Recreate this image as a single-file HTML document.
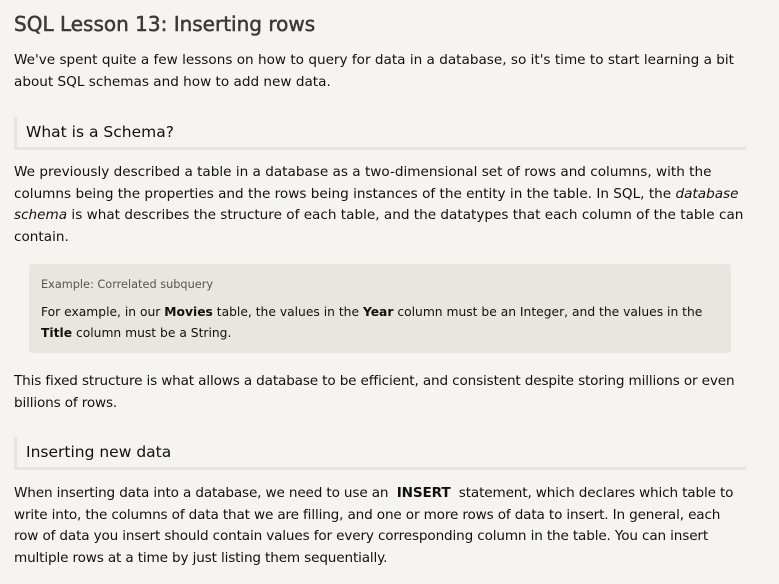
<!DOCTYPE html>
<html><head><style>
html,body{margin:0;background:#f5f4f0;width:779px;height:584px;overflow:hidden}
body{font-family:"DejaVu Sans",sans-serif;color:#111;font-size:13.6px;line-height:21.7px}
.w{position:absolute;left:14px;width:732px}
h1{position:absolute;left:14px;top:9px;margin:0;font-size:20px;font-weight:normal;color:#3a3a3a;font-family:"DejaVu Sans",sans-serif;line-height:30px;-webkit-text-stroke:0.5px #3a3a3a}
p{margin:0}
.h2{position:absolute;left:14px;height:30px;border-left:3px solid #e6e5dc;border-bottom:3px solid #e6e5dc;font-family:"DejaVu Sans",sans-serif;font-size:15.5px;line-height:30px;padding-left:9px;color:#111}
.box{position:absolute;left:29px;top:264px;width:702px;height:89px;background:#e8e6df;border-radius:3px}
.lab{position:absolute;left:12px;top:13px;font-size:11.3px;color:#555;line-height:16px}
.bt{position:absolute;left:12px;top:38px;width:680px;font-size:12.3px;line-height:21px}
.t{letter-spacing:-0.15px}
</style></head><body>
<h1>SQL Lesson 13: Inserting rows</h1>
<p class="w" style="top:50px">We've spent quite a few lessons on how to query for data in a database, so it's time to start learning a bit about SQL schemas and how to add new data.</p>
<div class="h2" style="top:117px;width:720px">What is a Schema?</div>
<p class="w" style="top:162px">We previously described a table in a database as a two-dimensional set of rows and columns, with the columns being the properties and the rows being instances of the entity in the table. In SQL, the <i>database schema</i> is what describes the structure of each table, and the datatypes that each column of the table can contain.</p>
<div class="box"><div class="lab">Example: Correlated subquery</div><div class="bt">For example, in our <b>Movies</b> table, the values in the <b>Year</b> column must be an Integer, and the values in the <b>Title</b> column must be a String.</div></div>
<p class="w t" style="top:371px">This fixed structure is what allows a database to be efficient, and consistent despite storing millions or even billions of rows.</p>
<div class="h2" style="top:437px;width:720px">Inserting new data</div>
<p class="w t" style="top:483px">When inserting data into a database, we need to use an &nbsp;<b>INSERT</b>&nbsp; statement, which declares which table to write into, the columns of data that we are filling, and one or more rows of data to insert. In general, each row of data you insert should contain values for every corresponding column in the table. You can insert multiple rows at a time by just listing them sequentially.</p>
</body></html>
